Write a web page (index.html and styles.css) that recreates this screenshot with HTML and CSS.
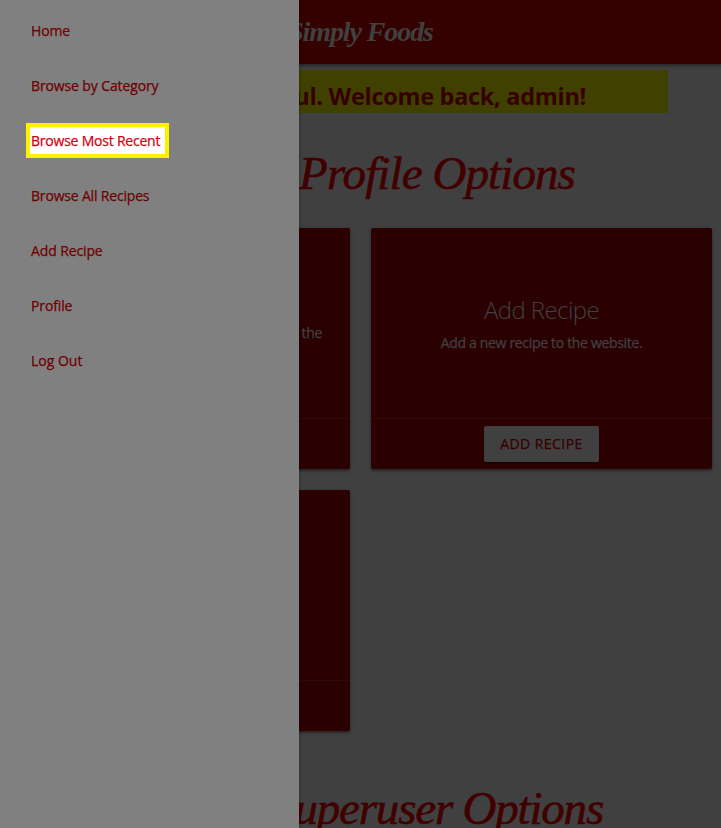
FILE: index.html
```html
<!DOCTYPE html>
<html lang="en">
<head>
<meta charset="utf-8">
<title>Simply Foods</title>
<link rel="stylesheet" href="styles.css">
</head>
<body>
<header class="navbar"><a class="logo">Simply Foods</a></header>
<div class="flash"><h4>Login Successful. Welcome back, admin!</h4></div>
<main>
  <h2 class="title title-profile">Profile Options</h2>
  <section class="cards">
    <article class="card">
      <div class="card-content"><p class="wide">the</p></div>
      <div class="card-action"></div>
    </article>
    <article class="card">
      <div class="card-content">
        <span class="card-title">Add Recipe</span>
        <p><span class="card-text">Add a new recipe to the website.</span></p>
      </div>
      <div class="card-action"><a class="btn"><span>ADD RECIPE</span></a></div>
    </article>
    <article class="card">
      <div class="card-content"></div>
      <div class="card-action"></div>
    </article>
  </section>
  <h2 class="title title-super">Superuser Options</h2>
</main>
<nav class="drawer">
  <a>Home</a>
  <a>Browse by Category</a>
  <a class="active">Browse Most Recent</a>
  <a class="snug">Browse All Recipes</a>
  <a>Add Recipe</a>
  <a>Profile</a>
  <a class="loose">Log Out</a>
</nav>
</body>
</html>
```

FILE: styles.css
```css
* { box-sizing: border-box; }
html, body { height: 828px; overflow: hidden; }
body {
  margin: 0;
  background: #404040;
  color: #404040;
  font: 500 14px/21px "Open Sans", "Noto Sans", sans-serif;
}
h2, h4, p { margin: 0; }

.navbar {
  height: 64px;
  background: #350000;
  box-shadow: 0 2px 3px rgba(0, 0, 0, .4);
  text-align: center;
}
.logo {
  font: italic bold 28px/64px "Liberation Serif", serif;
  letter-spacing: -1.1px;
}
.flash {
  width: 615px;
  height: 43px;
  margin: 6px auto 0;
  padding-right: 82px;
  background: #404000;
  color: #350000;
  text-align: right;
}
.flash h4 {
  font-size: 23.5px;
  font-weight: 700;
  line-height: 53px;
  white-space: nowrap;
  letter-spacing: -.3px;
}

.title {
  color: #400000;
  font: italic 47px/64px "Liberation Serif", serif;
  -webkit-text-stroke: .6px #400000;
  text-align: right;
  white-space: nowrap;
}
.title-profile { margin-top: 28px; padding-right: 146px; letter-spacing: -.9px; }
.title-super { margin-top: 45px; padding-right: 118px; letter-spacing: -1.2px; }

.cards {
  display: grid;
  grid-template-columns: 341px 341px;
  grid-auto-rows: 241px;
  gap: 21px;
  margin: 23px 9px 0;
}
.card {
  display: flex;
  flex-direction: column;
  background: #2b0000;
  border-radius: 2px;
  box-shadow: 0 2px 2px rgba(0, 0, 0, .3), 0 1px 5px rgba(0, 0, 0, .2);
}
.card-content {
  flex: 1;
  display: flex;
  flex-direction: column;
  justify-content: center;
  align-items: center;
}
.card-title { font-size: 24px; font-weight: 300; line-height: 32px; margin-bottom: 6px; letter-spacing: -.6px; }
.card-text { letter-spacing: -.32px; -webkit-text-stroke: .25px; }
.wide { width: 100%; padding: 18px 28px 0; text-align: right; letter-spacing: -.3px; -webkit-text-stroke: .25px; }
.card-action {
  height: 51px;
  border-top: 1px solid #330806;
  display: flex;
  justify-content: center;
  padding-top: 7px;
}
.btn {
  width: 115px;
  height: 36px;
  background: #404040;
  border-radius: 2px;
  color: #350000;
  line-height: 36px;
  text-align: center;
  letter-spacing: .45px;
  -webkit-text-stroke: .25px;
  box-shadow: 0 2px 2px rgba(0, 0, 0, .3);
}

.drawer {
  position: absolute;
  top: 0;
  left: 0;
  width: 299px;
  height: 828px;
  padding: 13px 26px;
  display: flex;
  flex-direction: column;
  align-items: flex-start;
  gap: 20px;
  background: #808080;
  color: #6e0000;
  box-shadow: 0 2px 3px rgba(0, 0, 0, .4);
  letter-spacing: -.12px;
  -webkit-text-stroke: .25px;
}
.drawer a { height: 35px; padding: 4px 0 0 5px; line-height: 28px; }
.drawer .snug { letter-spacing: -.18px; }
.drawer .loose { letter-spacing: 0; }
.drawer .active {
  width: 143px;
  padding: 0 0 0 1px;
  line-height: 27px;
  border: 4px solid #fff000;
  background: #fff;
  color: #d6000f;
  letter-spacing: -.22px;
  white-space: nowrap;
}
```
